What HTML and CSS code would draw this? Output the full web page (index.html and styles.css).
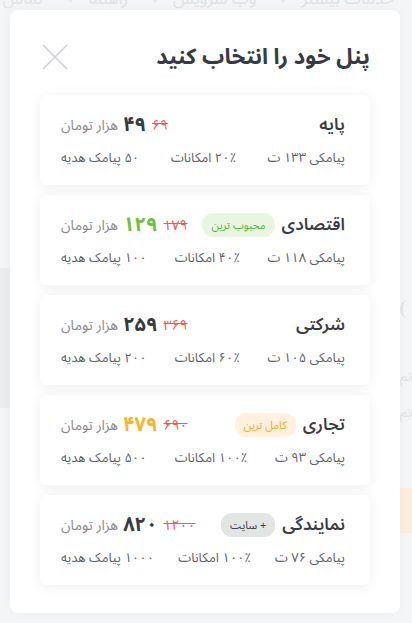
FILE: index.html
```html
<!DOCTYPE html>
<html lang="fa" dir="rtl">
<head>
<meta charset="utf-8">
<title>انتخاب پنل</title>
<link rel="stylesheet" href="styles.css">
</head>
<body>
<div class="page">
  <nav class="topnav">
    <span class="nav-item">خدمات بیشتر <i class="chev"></i></span>
    <span class="nav-item">وب سرویس <i class="chev"></i></span>
    <span class="nav-item">راهنما <i class="chev"></i></span>
    <span class="nav-item">تماس</span>
  </nav>
  <div class="bg-body">
    <div class="bg-left"></div>
    <div class="bg-right">
      <div class="bg-arc"></div>
      <div class="bg-line">تم</div>
      <div class="bg-line">تم</div>
      <div class="bg-orange"></div>
    </div>
  </div>
</div>

<div class="overlay">
  <div class="modal">
    <header class="modal-head">
      <h1 class="modal-title">پنل خود را انتخاب کنید</h1>
      <button class="close" aria-label="بستن">
        <svg width="26" height="26" viewBox="0 0 26 26"><path d="M1 1L25 25M25 1L1 25" stroke="#cfd0d3" stroke-width="1.6" fill="none"/></svg>
      </button>
    </header>

    <div class="plans">
      <div class="plan">
        <div class="row-top">
          <div class="name-wrap"><span class="plan-name">پایه</span></div>
          <div class="price-wrap">
            <span class="old">۶۹</span>
            <span class="price">۴۹</span>
            <span class="unit">هزار تومان</span>
          </div>
        </div>
        <div class="row-bottom">
          <span>پیامکی ۱۳۳ ت</span>
          <span>۲۰٪ امکانات</span>
          <span>۵۰ پیامک هدیه</span>
        </div>
      </div>

      <div class="plan">
        <div class="row-top">
          <div class="name-wrap"><span class="plan-name">اقتصادی</span><span class="badge badge-green">محبوب ترین</span></div>
          <div class="price-wrap">
            <span class="old">۱۷۹</span>
            <span class="price price-green">۱۲۹</span>
            <span class="unit">هزار تومان</span>
          </div>
        </div>
        <div class="row-bottom">
          <span>پیامکی ۱۱۸ ت</span>
          <span>۴۰٪ امکانات</span>
          <span>۱۰۰ پیامک هدیه</span>
        </div>
      </div>

      <div class="plan">
        <div class="row-top">
          <div class="name-wrap"><span class="plan-name">شرکتی</span></div>
          <div class="price-wrap">
            <span class="old">۳۶۹</span>
            <span class="price">۲۵۹</span>
            <span class="unit">هزار تومان</span>
          </div>
        </div>
        <div class="row-bottom">
          <span>پیامکی ۱۰۵ ت</span>
          <span>۶۰٪ امکانات</span>
          <span>۲۰۰ پیامک هدیه</span>
        </div>
      </div>

      <div class="plan">
        <div class="row-top">
          <div class="name-wrap"><span class="plan-name">تجاری</span><span class="badge badge-orange">کامل ترین</span></div>
          <div class="price-wrap">
            <span class="old">۶۹۰</span>
            <span class="price price-orange">۴۷۹</span>
            <span class="unit">هزار تومان</span>
          </div>
        </div>
        <div class="row-bottom">
          <span>پیامکی ۹۳ ت</span>
          <span>۱۰۰٪ امکانات</span>
          <span>۵۰۰ پیامک هدیه</span>
        </div>
      </div>

      <div class="plan">
        <div class="row-top">
          <div class="name-wrap"><span class="plan-name">نمایندگی</span><span class="badge badge-gray">+ سایت</span></div>
          <div class="price-wrap">
            <span class="old">۱۲۰۰</span>
            <span class="price">۸۲۰</span>
            <span class="unit">هزار تومان</span>
          </div>
        </div>
        <div class="row-bottom">
          <span>پیامکی ۷۶ ت</span>
          <span>۱۰۰٪ امکانات</span>
          <span>۱۰۰۰ پیامک هدیه</span>
        </div>
      </div>
    </div>
  </div>
</div>
</body>
</html>
```

FILE: styles.css
```css
* { box-sizing: border-box; }

html, body {
  margin: 0;
  padding: 0;
}

body {
  width: 412px;
  height: 623px;
  overflow: hidden;
  background: #f4f5f6;
  font-family: "Noto Sans Arabic", "Noto Sans", "DejaVu Sans", sans-serif;
  direction: rtl;
  position: relative;
}

/* faded page behind the modal */
.page {
  height: 100%;
  color: #e1e2e4;
}

.topnav {
  display: flex;
  gap: 24px;
  padding: 0 18px 0 0;
  margin-top: -12px;
  font-size: 17px;
  line-height: 22px;
  white-space: nowrap;
}

.nav-item {
  display: flex;
  align-items: center;
  gap: 14px;
}

.chev {
  width: 7px;
  height: 7px;
  border-left: 1.5px solid #e1e2e4;
  border-bottom: 1.5px solid #e1e2e4;
  transform: rotate(-45deg);
  margin-top: -4px;
}

.bg-body {
  display: flex;
  justify-content: space-between;
  margin-top: 258px;
}

.bg-left {
  width: 10px;
  height: 140px;
  background: #ebeced;
  order: 2;
}

.bg-right {
  order: 1;
  width: 12px;
  font-size: 14px;
  overflow: hidden;
  display: flex;
  flex-direction: column;
}

.bg-arc {
  width: 8px;
  height: 18px;
  margin: 32px 0 44px 0;
  border-left: 3px solid #e6e7e8;
  border-radius: 8px 0 0 8px;
  align-self: flex-end;
}

.bg-line {
  height: 36px;
  text-align: left;
  direction: ltr;
  white-space: nowrap;
}

.bg-orange {
  margin-top: 54px;
  height: 45px;
  background: #fbeedd;
}

/* modal */
.overlay {
  position: absolute;
  inset: 0;
  padding: 10px 12px 10px 10px;
}

.modal {
  height: 603px;
  background: #ffffff;
  border-radius: 8px;
  box-shadow: 0 0 12px rgba(0, 0, 0, 0.03);
  padding: 31px 30px 0 30px;
}

.modal-head {
  display: flex;
  justify-content: space-between;
  align-items: center;
  height: 32px;
  margin-bottom: 22px;
}

.modal-title {
  margin: 0;
  font-size: 22px;
  font-weight: 700;
  color: #363a43;
  line-height: 32px;
  white-space: nowrap;
}

.close {
  border: 0;
  background: none;
  padding: 0;
  margin-left: 2px;
  width: 26px;
  height: 26px;
  display: flex;
}

.plans {
  display: flex;
  flex-direction: column;
  gap: 10px;
}

.plan {
  height: 90px;
  background: #fff;
  border-radius: 6px;
  box-shadow: 0 2px 14px rgba(0, 0, 0, 0.07);
  padding: 15px 25px 0 21px;
  white-space: nowrap;
}

.row-top {
  display: flex;
  justify-content: space-between;
  align-items: center;
  height: 30px;
}

.name-wrap {
  display: flex;
  align-items: center;
  gap: 7px;
  flex-shrink: 0;
}

.plan-name {
  font-size: 17px;
  font-weight: 600;
  color: #3a3d45;
}

.badge {
  height: 24px;
  border-radius: 11px;
  padding: 0 9px;
  font-size: 11px;
  display: flex;
  align-items: center;
}

.badge-green { background: #e8f6e1; color: #5db631; }
.badge-orange { background: #fff1dd; color: #f6a821; }
.badge-gray { background: #e3e4e4; color: #3e4048; }

.price-wrap {
  display: flex;
  align-items: center;
  gap: 5px;
  flex-shrink: 0;
}

.old {
  font-size: 14px;
  color: #ff5252;
  text-decoration: line-through;
  margin-left: 1px;
}

.price {
  font-size: 20px;
  font-weight: 700;
  color: #363a43;
}

.price-green { color: #6ac33c; }
.price-orange { color: #fbb52a; }

.unit {
  font-size: 14px;
  color: #8a8c91;
}

.row-bottom {
  display: flex;
  justify-content: space-between;
  margin-top: 8px;
  font-size: 13px;
  line-height: 20px;
  color: #5f6167;
}
```
